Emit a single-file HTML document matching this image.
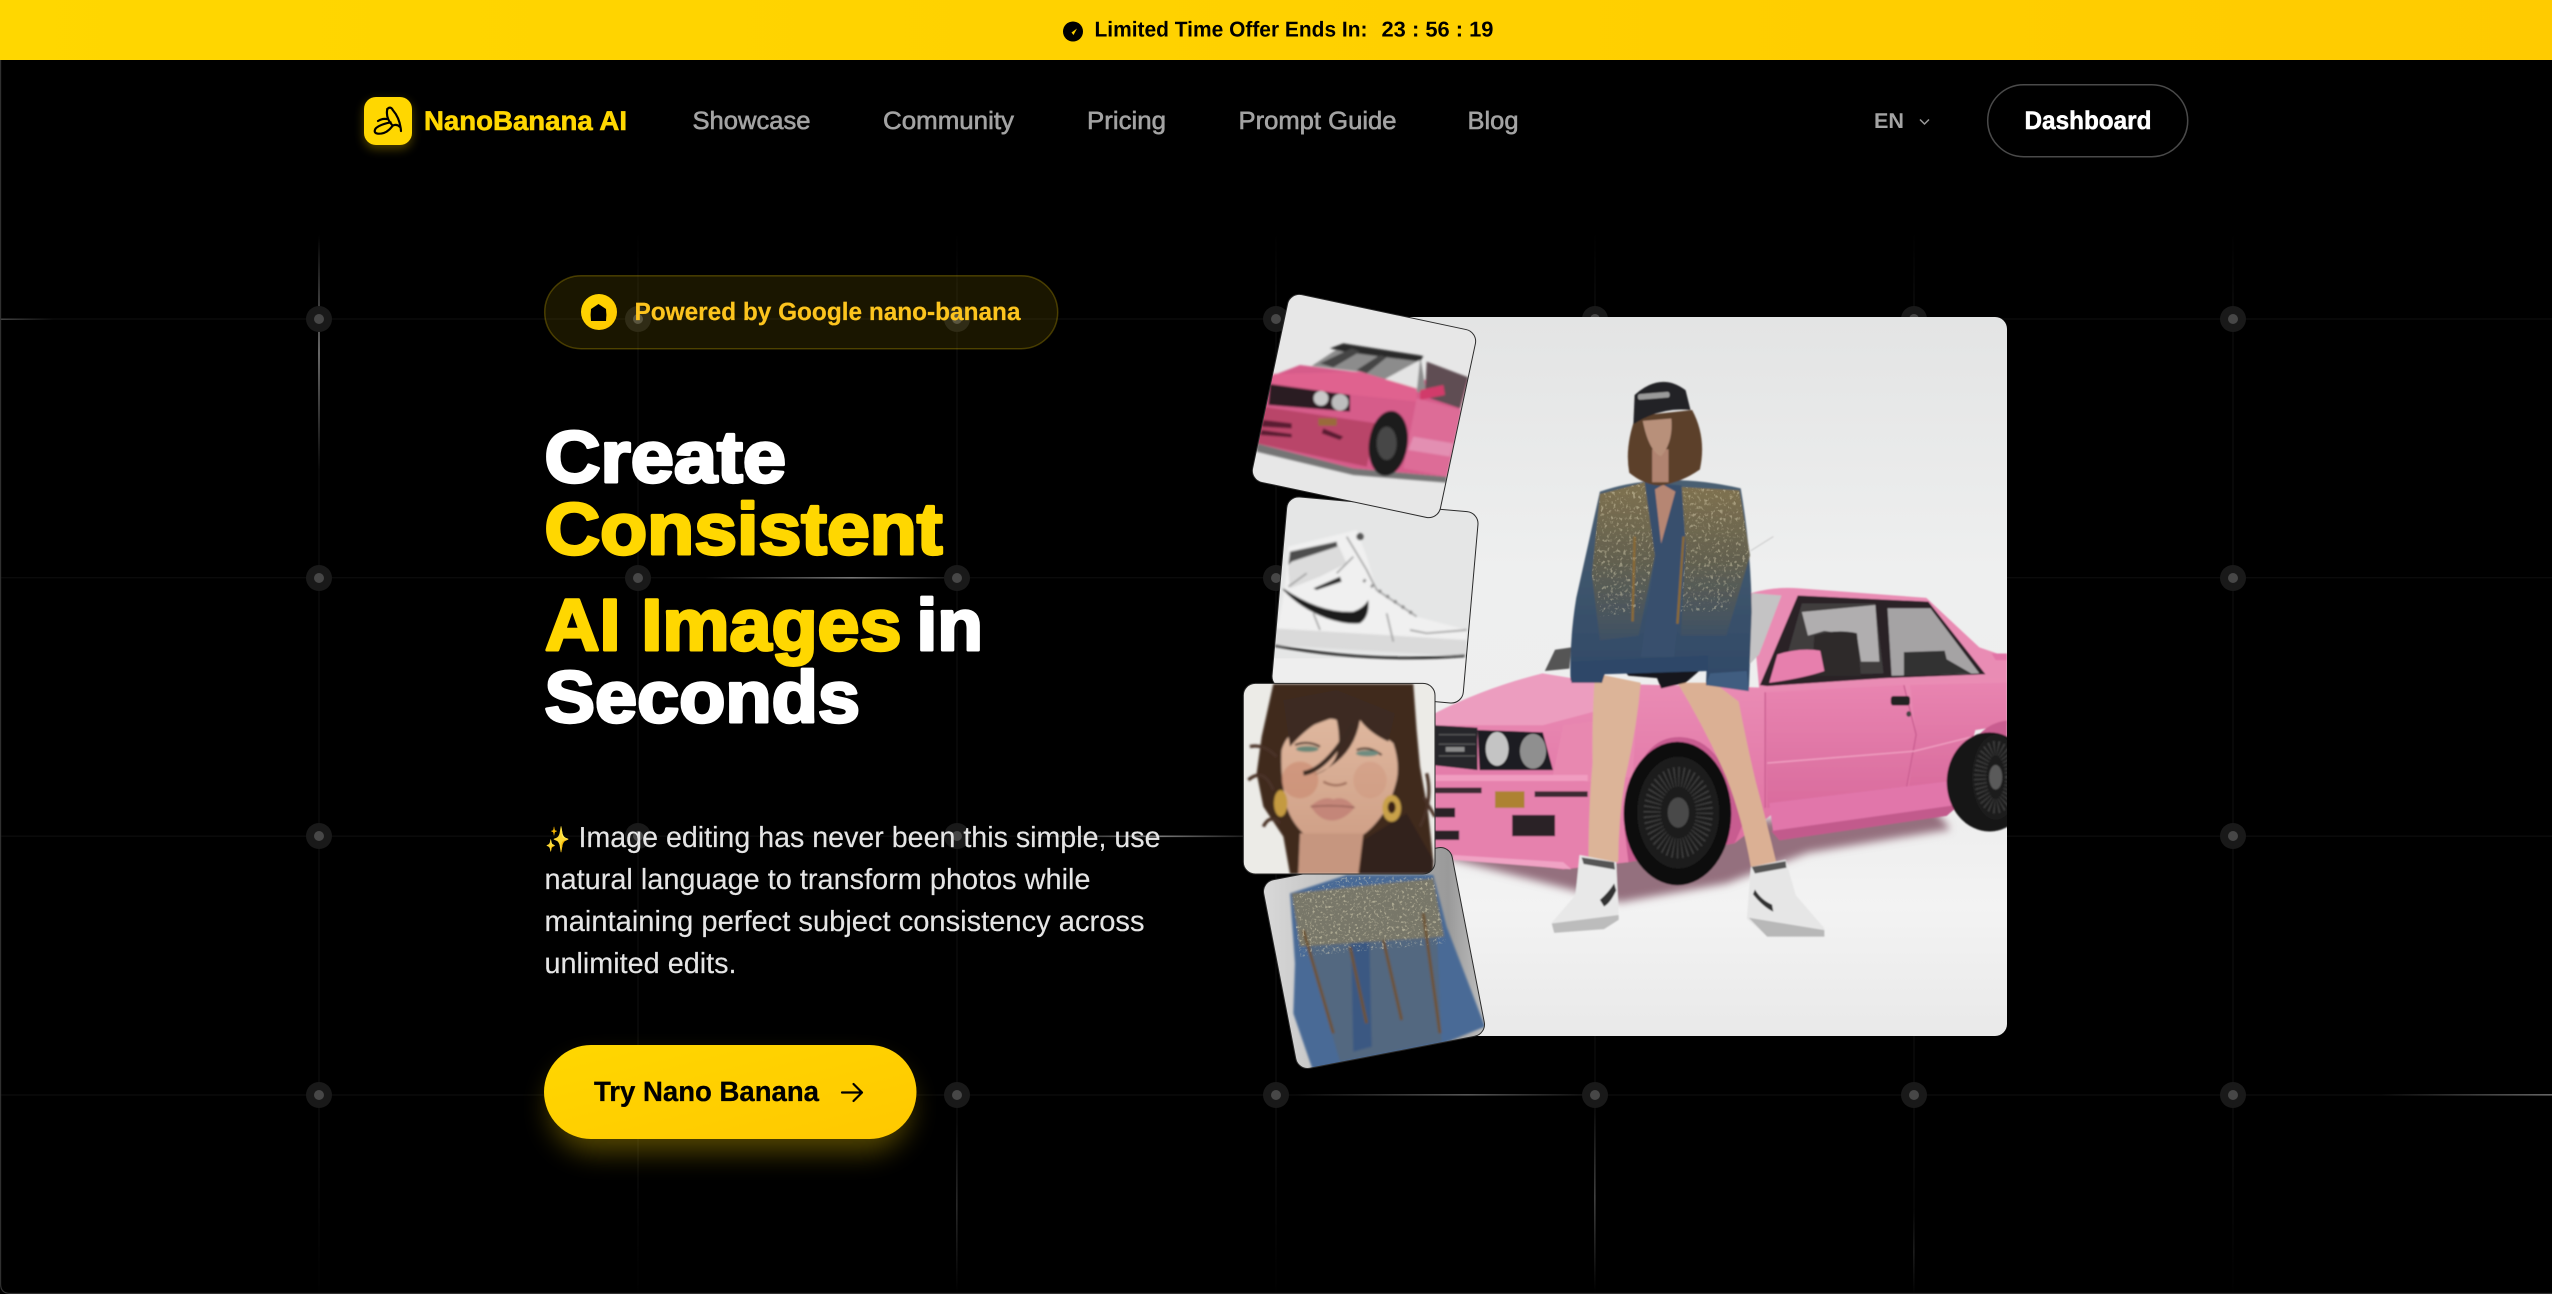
<!DOCTYPE html>
<html lang="en">
<head>
<meta charset="utf-8">
<title>NanoBanana AI</title>
<style>
html,body{margin:0;padding:0;background:#000;width:2552px;height:1294px;overflow:hidden}
svg{display:block}
text{font-family:"Liberation Sans",Arial,sans-serif;text-rendering:geometricPrecision}
.nav{font-size:25px;fill:#a3a3a3;stroke:#a3a3a3;stroke-width:.6px}
.h{font-size:73px;font-weight:700;stroke-width:3px;stroke-linejoin:round}
.w{fill:#fff;stroke:#fff}
.y{fill:#FFD700;stroke:#FFD700}
.p{font-size:29px;fill:#e5e5e5;stroke:#e5e5e5;stroke-width:.15px}
.ban{font-size:21.5px;font-weight:700;fill:#000}
</style>
</head>
<body>
<svg xmlns="http://www.w3.org/2000/svg" width="2552" height="1294" viewBox="0 0 2552 1294">
<defs>
<linearGradient id="ban" x1="0" x2="1" y1="0" y2="0"><stop offset="0" stop-color="#FFD700"/><stop offset="1" stop-color="#FFCB00"/></linearGradient>
<linearGradient id="btn" x1="0" x2="1" y1="0" y2="1"><stop offset="0" stop-color="#FFD700"/><stop offset="1" stop-color="#FFC800"/></linearGradient>
<linearGradient id="vl" gradientUnits="userSpaceOnUse" x1="0" y1="230" x2="0" y2="1294"><stop offset="0" stop-color="#0b0b0b" stop-opacity="0"/><stop offset=".06" stop-color="#0b0b0b"/><stop offset=".88" stop-color="#0b0b0b"/><stop offset="1" stop-color="#0b0b0b" stop-opacity=".1"/></linearGradient>
<linearGradient id="bv" x1="0" x2="0" y1="0" y2="1"><stop offset="0" stop-color="#666" stop-opacity="0"/><stop offset=".5" stop-color="#666"/><stop offset="1" stop-color="#666" stop-opacity="0"/></linearGradient>
<linearGradient id="bh" x1="0" x2="1" y1="0" y2="0"><stop offset="0" stop-color="#777" stop-opacity="0"/><stop offset=".6" stop-color="#777"/><stop offset="1" stop-color="#777" stop-opacity=".1"/></linearGradient>
<linearGradient id="bhr" x1="0" x2="1" y1="0" y2="0"><stop offset="0" stop-color="#666" stop-opacity="0"/><stop offset="1" stop-color="#666"/></linearGradient>
<linearGradient id="bhl" x1="0" x2="1" y1="0" y2="0"><stop offset="0" stop-color="#444"/><stop offset="1" stop-color="#444" stop-opacity="0"/></linearGradient>
<linearGradient id="bgH" x1="0" x2="0" y1="0" y2="1"><stop offset="0" stop-color="#e3e4e4"/><stop offset=".35" stop-color="#eeefef"/><stop offset=".7" stop-color="#eeeeee"/><stop offset=".82" stop-color="#f3f3f3"/><stop offset="1" stop-color="#e9e9e9"/></linearGradient>
<linearGradient id="pink" x1="0" x2="0" y1="0" y2="1"><stop offset="0" stop-color="#ea8db5"/><stop offset="1" stop-color="#dd6c9f"/></linearGradient>
<linearGradient id="door" x1="0" x2="0" y1="0" y2="1"><stop offset="0" stop-color="#e884b0"/><stop offset="1" stop-color="#d96b9d"/></linearGradient>
<linearGradient id="gold" x1="0" x2="0" y1="0" y2="1"><stop offset="0" stop-color="#7f7150"/><stop offset=".5" stop-color="#62604f"/><stop offset="1" stop-color="#3e5064"/></linearGradient>
<linearGradient id="slv" x1="0" x2="0" y1="0" y2="1"><stop offset="0" stop-color="#4a5f72"/><stop offset="1" stop-color="#2f4866"/></linearGradient>
<linearGradient id="jbg" x1="0" x2="1" y1="0" y2="0"><stop offset="0" stop-color="#dcdcdc"/><stop offset=".78" stop-color="#9a9a9a"/><stop offset="1" stop-color="#d4d4d4"/></linearGradient>
<linearGradient id="gskin" x1="0" x2="0" y1="0" y2="1"><stop offset="0" stop-color="#e0b9a0"/><stop offset="1" stop-color="#cf9f86"/></linearGradient>
<filter id="b1" x="-5%" y="-5%" width="110%" height="110%"><feGaussianBlur stdDeviation="1.8"/></filter>
<filter id="b2" x="-5%" y="-5%" width="110%" height="110%"><feGaussianBlur stdDeviation="3"/></filter>
<filter id="b5" x="-20%" y="-20%" width="140%" height="140%"><feGaussianBlur stdDeviation="9"/></filter>
<filter id="b16" x="-30%" y="-60%" width="160%" height="220%"><feGaussianBlur stdDeviation="14"/></filter>
<filter id="b6" x="-50%" y="-50%" width="200%" height="200%"><feGaussianBlur stdDeviation="5"/></filter>
<filter id="spk" x="0" y="0" width="100%" height="100%"><feTurbulence type="fractalNoise" baseFrequency=".13" numOctaves="2" seed="4"/><feColorMatrix values="0 0 0 0 .85  0 0 0 0 .78  0 0 0 0 .55  3.2 3.2 0 0 -3.4"/></filter>
<clipPath id="heroC"><rect x="1380" y="317" width="627" height="719" rx="12"/></clipPath>
<clipPath id="jc1"><path d="M490 390L600 365 625 520 585 640 490 650 470 560ZM690 375L832 382 858 520 800 640 688 640 700 500Z"/></clipPath>
<clipPath id="t1"><rect x="144" y="90" width="576" height="576" rx="36" transform="rotate(12 432 378)"/></clipPath>
<clipPath id="t2"><rect x="177" y="672" width="576" height="576" rx="36" transform="rotate(5 465 960)"/></clipPath>
<clipPath id="t3"><rect x="70" y="10" width="575" height="572" rx="36"/></clipPath>
<clipPath id="t4"><rect x="174" y="546" width="576" height="576" rx="36" transform="rotate(-11 462 834)"/></clipPath>
<clipPath id="j4"><path d="M215 650L380 590 640 590 680 790 240 830Z"/></clipPath>
</defs>

<rect width="2552" height="1294" fill="#000"/>

<!-- grid -->
<g fill="url(#vl)">
<rect x="318.3" y="230" width="1.4" height="1064"/><rect x="637.3" y="230" width="1.4" height="1064"/><rect x="956.3" y="230" width="1.4" height="1064"/><rect x="1275.3" y="230" width="1.4" height="1064"/><rect x="1594.3" y="230" width="1.4" height="1064"/><rect x="1913.3" y="230" width="1.4" height="1064"/><rect x="2232.3" y="230" width="1.4" height="1064"/>
</g>
<g fill="#0b0b0b">
<rect y="318.3" width="2552" height="1.4"/><rect y="577" width="2552" height="1.4"/><rect y="835.5" width="2552" height="1.4"/><rect y="1094.3" width="2552" height="1.4"/>
</g>
<!-- beams -->
<rect x="318" y="237" width="2" height="233" fill="url(#bv)"/>
<rect x="0" y="318.5" width="54" height="1.5" fill="url(#bhl)"/>
<rect x="705" y="577" width="245" height="1.6" fill="url(#bh)"/>
<rect x="1026" y="835.5" width="225" height="1.6" fill="url(#bh)"/>
<rect x="1294" y="1094" width="290" height="1.6" fill="url(#bh)" opacity=".7"/>
<rect x="2380" y="1094" width="172" height="1.6" fill="url(#bhr)"/>
<rect x="956" y="1120" width="1.6" height="170" fill="url(#bv)" opacity=".35"/>
<rect x="1594" y="1105" width="1.6" height="185" fill="url(#bv)" opacity=".6"/>
<rect x="1913" y="1210" width="1.6" height="84" fill="url(#bv)" opacity=".25"/>
<!-- dots -->
<g id="dots">
<g fill="#191919">
<circle cx="319" cy="319" r="13"/><circle cx="638" cy="319" r="13"/><circle cx="957" cy="319" r="13"/><circle cx="1276" cy="319" r="13"/><circle cx="1595" cy="319" r="13"/><circle cx="1914" cy="319" r="13"/><circle cx="2233" cy="319" r="13"/>
<circle cx="319" cy="578" r="13"/><circle cx="638" cy="578" r="13"/><circle cx="957" cy="578" r="13"/><circle cx="1276" cy="578" r="13"/><circle cx="2233" cy="578" r="13"/>
<circle cx="319" cy="836" r="13"/><circle cx="638" cy="836" r="13"/><circle cx="957" cy="836" r="13"/><circle cx="2233" cy="836" r="13"/>
<circle cx="319" cy="1095" r="13"/><circle cx="638" cy="1095" r="13"/><circle cx="957" cy="1095" r="13"/><circle cx="1276" cy="1095" r="13"/><circle cx="1595" cy="1095" r="13"/><circle cx="1914" cy="1095" r="13"/><circle cx="2233" cy="1095" r="13"/>
</g>
<g fill="#474747">
<circle cx="319" cy="319" r="5"/><circle cx="638" cy="319" r="5"/><circle cx="957" cy="319" r="5"/><circle cx="1276" cy="319" r="5"/><circle cx="1595" cy="319" r="5"/><circle cx="1914" cy="319" r="5"/><circle cx="2233" cy="319" r="5"/>
<circle cx="319" cy="578" r="5"/><circle cx="638" cy="578" r="5"/><circle cx="957" cy="578" r="5"/><circle cx="1276" cy="578" r="5"/><circle cx="2233" cy="578" r="5"/>
<circle cx="319" cy="836" r="5"/><circle cx="638" cy="836" r="5"/><circle cx="957" cy="836" r="5"/><circle cx="2233" cy="836" r="5"/>
<circle cx="319" cy="1095" r="5"/><circle cx="638" cy="1095" r="5"/><circle cx="957" cy="1095" r="5"/><circle cx="1276" cy="1095" r="5"/><circle cx="1595" cy="1095" r="5"/><circle cx="1914" cy="1095" r="5"/><circle cx="2233" cy="1095" r="5"/>
</g>
</g>

<!-- window border: left + bottom only -->
<path d="M.6 60V1284Q.6 1293.4 10 1293.4H2552" fill="none" stroke="#333" stroke-width="1.1"/>

<!-- banner -->
<rect width="2552" height="60" fill="url(#ban)"/>
<circle cx="1073" cy="31.5" r="10" fill="#000"/>
<path d="M1077 28.5L1071.5 32.5 1073.5 35Z" fill="#FFD400"/>
<text class="ban" x="1094.5" y="36.7" textLength="273" lengthAdjust="spacingAndGlyphs">Limited Time Offer Ends In:</text>
<text class="ban" x="1381.5" y="36.7" textLength="112" lengthAdjust="spacingAndGlyphs">23 : 56 : 19</text>

<!-- nav -->
<rect x="364" y="101" width="48" height="48" rx="12" fill="#FFD700" opacity=".3" filter="url(#b6)"/>
<rect x="364" y="97" width="48" height="48" rx="12" fill="#FFD700"/>
<g transform="translate(350 85) scale(.3333)" fill="none" stroke="#000" stroke-width="6.5" stroke-linecap="round" stroke-linejoin="round">
<path d="M112 72Q122 62 129 76 150 100 153 138"/>
<path d="M112 72Q106 100 128 122 110 148 84 146 70 144 76 132 84 120 122 112"/>
<path d="M84 108Q96 100 110 102"/>
<path d="M128 122Q140 116 150 126"/>
</g>
<text x="424" y="130" font-size="27" font-weight="700" fill="#FFD700" stroke="#FFD700" stroke-width=".6" textLength="203" lengthAdjust="spacingAndGlyphs">NanoBanana AI</text>
<text class="nav" x="692.5" y="129" textLength="118" lengthAdjust="spacingAndGlyphs">Showcase</text>
<text class="nav" x="883" y="129" textLength="131" lengthAdjust="spacingAndGlyphs">Community</text>
<text class="nav" x="1087" y="129" textLength="79" lengthAdjust="spacingAndGlyphs">Pricing</text>
<text class="nav" x="1238.5" y="129" textLength="158" lengthAdjust="spacingAndGlyphs">Prompt Guide</text>
<text class="nav" x="1467.5" y="129" textLength="51" lengthAdjust="spacingAndGlyphs">Blog</text>
<text x="1874" y="128" font-size="21.5" font-weight="700" fill="#a3a3a3" textLength="30" lengthAdjust="spacingAndGlyphs">EN</text>
<path d="M1920 119.5L1924.5 124 1929 119.5" fill="none" stroke="#9a9a9a" stroke-width="1.5"/>
<rect x="1987.7" y="84.7" width="200" height="72" rx="36" fill="#000" stroke="#4a4a4a" stroke-width="1.5"/>
<text x="2024.5" y="129" font-size="25.5" font-weight="700" fill="#fff" stroke="#fff" stroke-width=".5" textLength="127" lengthAdjust="spacingAndGlyphs">Dashboard</text>

<!-- badge -->
<rect x="544.7" y="275.7" width="513" height="73" rx="36.5" fill="#FFD700" fill-opacity=".1" stroke="#FFD700" stroke-opacity=".25" stroke-width="1.5"/>
<circle cx="599" cy="312" r="18" fill="url(#btn)"/>
<path d="M598.5 304L606 309Q606.8 315 606 321L591 321Q590.2 315 591 309Z" fill="#000"/>
<text x="634.5" y="320" font-size="25" font-weight="700" fill="#FCC41E" stroke="#FCC41E" stroke-width=".2" textLength="386" lengthAdjust="spacingAndGlyphs">Powered by Google nano-banana</text>

<!-- heading -->
<text class="h w" x="544.5" y="482" textLength="241.5" lengthAdjust="spacingAndGlyphs">Create</text>
<text class="h y" x="544.5" y="554" textLength="398" lengthAdjust="spacingAndGlyphs">Consistent</text>
<text class="h y" x="545" y="650" textLength="356.5" lengthAdjust="spacingAndGlyphs">AI Images</text>
<text class="h w" x="916.5" y="650" textLength="66.5" lengthAdjust="spacingAndGlyphs">in</text>
<text class="h w" x="544.5" y="722" textLength="315.5" lengthAdjust="spacingAndGlyphs">Seconds</text>

<!-- paragraph -->
<text x="545" y="848" font-size="25" style="font-family:'DejaVu Sans',sans-serif" fill="#FFD23F" textLength="25" lengthAdjust="spacingAndGlyphs">✨</text>
<text class="p" x="578.5" y="847" textLength="582" lengthAdjust="spacingAndGlyphs">Image editing has never been this simple, use</text>
<text class="p" x="544.5" y="889" textLength="546" lengthAdjust="spacingAndGlyphs">natural language to transform photos while</text>
<text class="p" x="544.5" y="931" textLength="600" lengthAdjust="spacingAndGlyphs">maintaining perfect subject consistency across</text>
<text class="p" x="544.5" y="973" textLength="192" lengthAdjust="spacingAndGlyphs">unlimited edits.</text>

<!-- button -->
<rect x="550" y="1062" width="360" height="90" rx="45" fill="#FFD700" opacity=".33" filter="url(#b16)"/>
<rect x="544" y="1045" width="372.5" height="94" rx="47" fill="url(#btn)"/>
<text x="594" y="1101" font-size="28" font-weight="700" fill="#000" stroke="#000" stroke-width=".3" textLength="225" lengthAdjust="spacingAndGlyphs">Try Nano Banana</text>
<path d="M842 1092.5H862M853.5 1084L862 1092.5 853.5 1101" fill="none" stroke="#000" stroke-width="2.2" stroke-linecap="round" stroke-linejoin="round"/>

<!-- hero -->
<g clip-path="url(#heroC)">
<rect x="1380" y="317" width="627" height="719" fill="url(#bgH)"/>
<g transform="translate(1400 310) scale(.408 .4719)">
<g filter="url(#b1)">
<!-- shadow -->
<path d="M110 1160L540 1255 800 1215 1000 1150 1350 1100 1300 1050 110 1140Z" fill="#94707e" filter="url(#b5)"/>
<!-- roof -->
<path d="M860 600Q920 585 980 590L1290 610 1420 715 1488 735V800H880Z" fill="#e98cb4"/>
<path d="M862 600L935 605 880 730 858 750Z" fill="#c4c3c4"/>
<path d="M882 795L975 605 1295 618 1435 772 1190 780 900 797Z" fill="#2a2328"/>
<path d="M935 775L985 622 1165 622 1185 770Z" fill="#403c3e"/>
<path d="M985 640L1165 625 1175 745 1130 745 1120 690 1040 680 1000 690Z" fill="#b0aeaf"/>
<path d="M1010 775L1015 690Q1070 675 1120 685L1130 775Z" fill="#2e2b2c"/>
<path d="M1205 775L1195 632 1300 632 1420 770Z" fill="#a5a3a4"/>
<path d="M1235 775V725L1335 722 1340 740 1400 770Z" fill="#333"/>
<path d="M1450 728H1488V742H1460Z" fill="#e275a7"/>
<path d="M380 720L420 715 415 760 355 765Z" fill="#555"/>
<!-- body -->
<path d="M85 855Q210 800 350 770L420 790 880 800 1240 790 1488 780V880L1410 890 1375 1015 910 1070 820 1130 560 1170 400 1185 130 1155 85 1140Z" fill="url(#pink)"/>
<path d="M85 855Q210 800 350 770L560 800 480 850 350 880H85Z" fill="#ec9dbf"/>
<path d="M895 810L1235 795 1265 900 1240 1020 900 1055Z" fill="url(#door)"/>
<path d="M1250 795L1488 790V880L1410 890 1370 1010 1245 1020 1265 900Z" fill="url(#door)"/>
<path d="M895 810V1055M1235 795L1265 900 1240 1020" fill="none" stroke="#c75a8e" stroke-width="3"/>
<path d="M900 960L1260 935 1400 905" fill="none" stroke="#ef9fc1" stroke-width="3"/>
<rect x="1203" y="818" width="47" height="20" rx="6" fill="#222"/>
<circle cx="1247" cy="856" r="6" fill="#444"/>
<path d="M905 1045L1380 995 1372 1050 915 1108Z" fill="#e176aa"/>
<path d="M910 1104L1372 1048 1340 1072 930 1124Z" fill="#c25a8c"/>
<path d="M85 985L460 1000 580 990 560 1170 400 1185 130 1155 85 1140Z" fill="#e681ad"/>
<path d="M400 880L580 860 570 990 460 1000 375 985Z" fill="#e888b0"/>
<path d="M85 985H460V998H85Z" fill="#f09cc0"/>
<rect x="85" y="1012" width="115" height="12" fill="#3a2c33"/>
<rect x="330" y="1020" width="130" height="12" fill="#3a2c33"/>
<rect x="233" y="1020" width="72" height="35" fill="#ad8230"/>
<rect x="275" y="1070" width="105" height="45" fill="#2a2226"/>
<rect x="85" y="1055" width="50" height="20" fill="#2a2226"/>
<rect x="85" y="1103" width="60" height="20" fill="#2a2226"/>
<path d="M130 1155L400 1170 420 1185 130 1165Z" fill="#f0a3c4"/>
<!-- grille + lights -->
<path d="M85 880L190 885V975L85 965Z" fill="#26262a"/>
<path d="M95 900H185M95 920H185M95 945H185" stroke="#555" stroke-width="3"/>
<rect x="112" y="926" width="46" height="10" fill="#8a8a8a"/>
<path d="M190 890L350 895 375 975 195 975Z" fill="#1d1d20"/>
<ellipse cx="238" cy="930" rx="28" ry="36" fill="#c4c4c4"/>
<ellipse cx="326" cy="935" rx="32" ry="37" fill="#8f8f8f"/>
<!-- front wheel -->
<path d="M550 1100Q570 900 690 905 800 910 840 1090L820 1130 560 1170Z" fill="#c85c90"/>
<ellipse cx="680" cy="1067" rx="132" ry="152" fill="#101010"/>
<ellipse cx="682" cy="1065" rx="100" ry="118" fill="#1a1a1a"/>
<ellipse cx="682" cy="1065" rx="64" ry="76" fill="none" stroke="#3c3c3c" stroke-width="42" stroke-dasharray="3 7"/>
<ellipse cx="682" cy="1065" rx="26" ry="32" fill="#4a4a4a"/>
<!-- rear wheel -->
<path d="M1370 1010Q1390 880 1488 870V1040Z" fill="#c95d90"/>
<ellipse cx="1445" cy="1000" rx="105" ry="105" fill="#121212"/>
<ellipse cx="1460" cy="990" rx="58" ry="90" fill="#1e1e1e"/>
<ellipse cx="1460" cy="990" rx="38" ry="62" fill="none" stroke="#3a3a3a" stroke-width="30" stroke-dasharray="3 6"/>
<ellipse cx="1460" cy="990" rx="16" ry="26" fill="#5a5a5a"/>
<path d="M925 730Q980 715 1030 722L1040 765Q990 780 905 790Z" fill="#e77fad"/>
<!-- legs -->
<path d="M478 770L590 790Q580 890 552 990 535 1080 535 1170L462 1165Q462 1050 472 960 470 860 478 770Z" fill="#dcb498"/>
<path d="M680 790L770 790 830 830Q850 920 872 1000 900 1090 922 1170L860 1180Q840 1080 800 990 750 890 680 790Z" fill="#dbb094"/>
<!-- shoes -->
<path d="M440 1155L530 1170 536 1280 500 1310 378 1318 372 1298 430 1240Z" fill="#e8e8e8"/>
<path d="M372 1300L536 1282 536 1292 500 1312 378 1320Z" fill="#bcbcbc"/>
<path d="M490 1250Q510 1235 525 1215L530 1230Q515 1258 500 1264Z" fill="#333"/>
<path d="M445 1160L525 1170 527 1186 450 1174Z" fill="#555"/>
<path d="M860 1180L945 1165 970 1240 1040 1310V1328H900L850 1290Z" fill="#e6e6e6"/>
<path d="M855 1288L1040 1314V1328H900Z" fill="#b8b8b8"/>
<path d="M865 1238Q890 1265 915 1275L912 1260Q885 1250 870 1228Z" fill="#333"/>
<path d="M862 1180L945 1168 947 1182 870 1194Z" fill="#555"/>
<!-- shorts -->
<path d="M540 755L740 760 700 790 640 802 630 780 560 775Z" fill="#16161a"/>
<!-- jacket -->
<path d="M490 385Q640 340 835 378 860 500 862 640L855 805 750 795 752 745 510 750 495 790 418 785Q415 700 432 610Z" fill="url(#slv)"/>
<path d="M490 390L600 365 625 520 585 690 490 700 470 560Z" fill="url(#gold)"/>
<path d="M690 375L832 382 858 520 800 690 688 690 700 500Z" fill="url(#gold)"/>
<path d="M600 365L690 372 700 500 672 735 590 735 625 520Z" fill="#38506d"/>
<path d="M625 380L645 370 675 385 640 495Z" fill="#b68673"/>
<path d="M420 745L755 732V765L500 772 495 790 420 790Z" fill="#2d4767"/>
<path d="M760 770L850 765 855 808 750 795Z" fill="#3f5d80"/>
<path d="M575 480L570 660M695 480L680 665" stroke="#8a6a35" stroke-width="6" fill="none"/>
<path d="M860 510L915 480" stroke="#bbb" stroke-width="1.5"/>
<!-- head -->
<path d="M578 225Q550 290 562 345 600 372 640 372 690 365 735 338 752 270 716 212Z" fill="#5c402a"/>
<rect x="618" y="295" width="40" height="70" fill="#b08370"/>
<path d="M595 235L665 230Q670 280 640 310 610 300 595 235Z" fill="#b8907a"/>
<path d="M572 242L575 180Q640 130 700 170L712 212Q640 205 572 242Z" fill="#242426"/>
<rect x="583" y="176" width="78" height="12" rx="5" fill="#9a9a9a" transform="rotate(-4 620 183)"/>
</g>
<g clip-path="url(#jc1)"><rect x="470" y="340" width="390" height="310" filter="url(#spk)" opacity=".38"/></g>
</g>
</g>

<!-- thumb 4: jacket -->
<g transform="translate(1220 680) scale(.33333)">
<g clip-path="url(#t4)">
<rect x="100" y="500" width="750" height="700" fill="url(#jbg)"/>
<g filter="url(#b2)">
<path d="M210 640L380 585H640L680 740 795 1040 670 1090 280 1175 220 1000 225 850Z" fill="#4a6a96"/>
<path d="M250 770L650 735 665 1085 360 1145Z" fill="#536880"/>
<path d="M390 640H445L455 1100 400 1115Z" fill="#3b5882"/>
<path d="M215 640L640 595 672 770 240 800Z" fill="#787769"/>
<path d="M250 750L340 1060M610 700L660 1060M390 800L440 1030M490 780L545 1020" stroke="#6d5330" stroke-width="9" fill="none"/>
</g>
<g clip-path="url(#j4)"><rect x="210" y="585" width="480" height="250" filter="url(#spk)" opacity=".48"/></g>
</g>
<rect x="174" y="546" width="576" height="576" rx="36" transform="rotate(-11 462 834)" fill="none" stroke="#2a2a2a" stroke-width="3"/>
</g>

<!-- thumb 2: shoe -->
<g transform="translate(1220 280) scale(.33333)">
<g clip-path="url(#t2)">
<rect x="100" y="620" width="720" height="680" fill="#e5e6e6"/>
<rect x="100" y="1135" width="720" height="170" fill="#eeeeee"/>
<g filter="url(#b2)">
<path d="M205 800L410 750 440 830 470 930 590 1010 740 1050V1100L165 1090 195 920Z" fill="#f0f0f0"/>
<path d="M205 870L210 815 350 785 380 850 300 890 210 925Z" fill="#dcdcdc"/>
<path d="M205 855L210 815 350 785 352 800 215 845Z" fill="#4d4d4d"/>
<path d="M190 925Q300 1000 400 995 430 985 445 960 450 1010 420 1030 380 1035 320 1015 240 985 190 930Z" fill="#1d1d1d"/>
<path d="M280 925L360 890 365 905 290 930Z" fill="#2a2a2a"/>
<path d="M165 1045L740 1080V1130L165 1095Z" fill="#dadada"/>
<path d="M165 1097Q450 1150 735 1127" stroke="#151515" stroke-width="7" fill="none"/>
<path d="M380 770L440 870 470 930 590 1010M280 1000L300 1050M500 1000L520 1085M570 1050L620 1060 740 1050M400 830L350 880M205 920L260 880" stroke="#9f9f9f" stroke-width="5" fill="none"/>
<path d="M430 900L590 1010" stroke="#8a8a8a" stroke-width="10" stroke-dasharray="8 20" fill="none"/>
<circle cx="420" cy="770" r="11" fill="#555"/>
</g>
</g>
<rect x="177" y="672" width="576" height="576" rx="36" transform="rotate(5 465 960)" fill="none" stroke="#2a2a2a" stroke-width="3"/>

<!-- thumb 1: car -->
<g clip-path="url(#t1)">
<rect x="50" y="0" width="780" height="760" fill="#e7e7e7"/>
<g filter="url(#b2)">
<path d="M110 490L400 565 680 590 680 608 400 585 110 515Z" fill="#757575"/>
<path d="M150 290L240 255 600 300 745 300 720 390 680 590 400 565 110 490Z" fill="#d65c8a"/>
<path d="M275 258L370 195 600 225 620 345 420 275Z" fill="#8c8c8c"/>
<path d="M330 205L370 190 610 228 600 245 370 215Z" fill="#2c2c2c"/>
<path d="M300 250L395 205 420 215 340 262ZM410 270L480 225 500 232 440 280Z" fill="#454545"/>
<path d="M490 300L600 240 590 335Z" fill="#e4e4e4"/>
<path d="M620 245L745 292 720 385 615 350Z" fill="#5e4d52"/>
<path d="M160 282L420 275 590 325 590 365 400 345 150 320Z" fill="#e0628f"/>
<path d="M150 312L390 345V395L145 375Z" fill="#2a1a20"/>
<circle cx="303" cy="355" r="22" fill="#c9c9c9"/><circle cx="360" cy="367" r="25" fill="#bdbdbd"/>
<path d="M130 380L470 430 440 560 110 490Z" fill="#b94469"/>
<path d="M130 420L215 430V445L125 440ZM125 450L215 462V472L120 465ZM310 445L370 470 360 480 305 460Z" fill="#5a1c30"/>
<rect x="295" y="415" width="55" height="22" fill="#9a6a3a"/>
<path d="M600 330L670 315 675 345 600 360Z" fill="#d13a6a"/>
<path d="M590 355L725 390 682 590 550 565Z" fill="#dd6c97"/>
<path d="M580 470L700 490 690 530 565 510Z" fill="#e38fb2"/>
<ellipse cx="505" cy="490" rx="58" ry="98" fill="#1a1a1a" transform="rotate(8 505 490)"/>
<ellipse cx="500" cy="490" rx="30" ry="50" fill="#474747"/>
</g>
</g>
<rect x="144" y="90" width="576" height="576" rx="36" transform="rotate(12 432 378)" fill="none" stroke="#2a2a2a" stroke-width="3"/>
</g>

<!-- thumb 3: face -->
<g transform="translate(1220 680) scale(.33333)">
<g clip-path="url(#t3)">
<rect x="70" y="10" width="575" height="572" fill="#ecebe7"/>
<g filter="url(#b2)">
<path d="M160 12L580 12 590 150 600 260 625 400 640 545 560 582H210L190 470 130 380 110 280 125 170Z" fill="#40291f"/>
<path d="M90 200Q130 190 170 230M85 300Q130 260 160 330M130 440Q150 400 180 430M620 280Q640 360 600 440M610 350L645 410" stroke="#4a3228" stroke-width="10" fill="none"/>
<path d="M185 210Q200 160 240 150L400 90 520 190Q540 250 530 300 515 360 490 400 455 450 420 470 380 492 340 492 300 490 260 470 215 430 200 380 180 290 185 210Z" fill="url(#gskin)"/>
<ellipse cx="240" cy="300" rx="55" ry="55" fill="#c9856c" opacity=".55"/>
<ellipse cx="450" cy="300" rx="50" ry="55" fill="#cf957c" opacity=".45"/>
<path d="M240 460H430L415 582H235Z" fill="#c6967f"/>
<path d="M210 200Q300 100 350 120 380 260 280 285 400 240 420 120 450 160 505 185L525 100 350 30 190 60Z" fill="#3e2a21"/>
<path d="M430 480L560 400 640 540V582H420Z" fill="#33231c"/>
<path d="M225 195Q265 180 300 200M410 210Q445 195 485 225" stroke="#3a2a22" stroke-width="6" fill="none"/>
<ellipse cx="262" cy="207" rx="34" ry="9" fill="#6b8878"/>
<ellipse cx="442" cy="220" rx="34" ry="9" fill="#6e8c80"/>
<path d="M310 305Q345 325 380 308" stroke="#a06f5c" stroke-width="7" fill="none"/>
<path d="M272 378Q310 345 340 358 375 345 404 382 375 420 335 422 295 420 272 378Z" fill="#c48679"/>
<path d="M272 380Q338 374 404 382" stroke="#7d4d45" stroke-width="3" fill="none"/>
<ellipse cx="182" cy="370" rx="20" ry="40" fill="#c49a40"/>
<ellipse cx="515" cy="385" rx="28" ry="40" fill="#c9a14a"/>
<ellipse cx="515" cy="382" rx="12" ry="18" fill="#3a2418"/>
<path d="M250 280Q320 270 400 130" stroke="#3b2a22" stroke-width="14" fill="none"/>
</g>
</g>
<rect x="70" y="10" width="575" height="572" rx="36" fill="none" stroke="#2a2a2a" stroke-width="3"/>
</g>
</svg>
</body>
</html>
